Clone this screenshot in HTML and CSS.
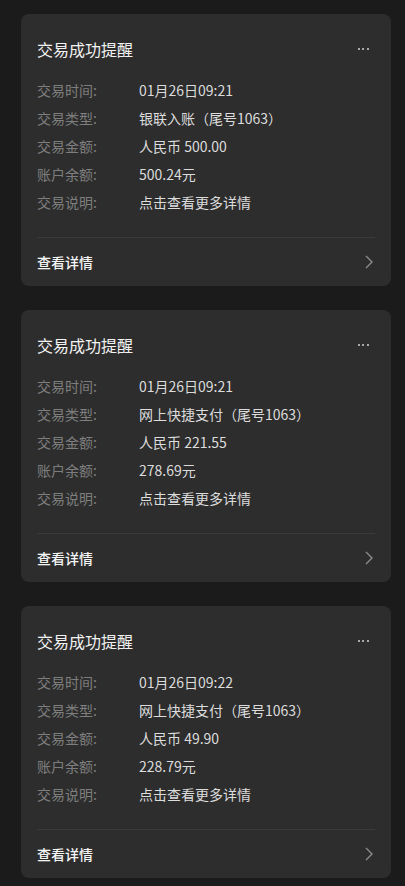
FILE: index.html
```html
<!DOCTYPE html>
<html lang="zh-CN">
  <head>
    <meta charset="UTF-8" />
    <meta name="viewport" content="width=device-width, initial-scale=1.0" />
    <title>交易提醒</title>
    <link rel="stylesheet" href="styles.css">
  </head>
  <body>
    <div class="list">
      <div class="card">
        <div class="card-head">
          <span class="title">交易成功提醒</span>
          <span class="more"><i></i><i></i><i></i></span>
        </div>
        <div class="rows">
          <div class="row"><span class="label">交易时间:</span><span class="value">01月26日09:21</span></div>
          <div class="row"><span class="label">交易类型:</span><span class="value">银联入账（尾号1063）</span></div>
          <div class="row"><span class="label">交易金额:</span><span class="value">人民币 500.00</span></div>
          <div class="row"><span class="label">账户余额:</span><span class="value">500.24元</span></div>
          <div class="row"><span class="label">交易说明:</span><span class="value">点击查看更多详情</span></div>
        </div>
        <div class="card-foot">
          <span>查看详情</span>
          <svg class="arrow" width="8" height="14" viewBox="0 0 8 14"><path d="M1 1l6 6-6 6" fill="none" stroke="#8c8c8c" stroke-width="1.4"/></svg>
        </div>
      </div>

      <div class="card">
        <div class="card-head">
          <span class="title">交易成功提醒</span>
          <span class="more"><i></i><i></i><i></i></span>
        </div>
        <div class="rows">
          <div class="row"><span class="label">交易时间:</span><span class="value">01月26日09:21</span></div>
          <div class="row"><span class="label">交易类型:</span><span class="value">网上快捷支付（尾号1063）</span></div>
          <div class="row"><span class="label">交易金额:</span><span class="value">人民币 221.55</span></div>
          <div class="row"><span class="label">账户余额:</span><span class="value">278.69元</span></div>
          <div class="row"><span class="label">交易说明:</span><span class="value">点击查看更多详情</span></div>
        </div>
        <div class="card-foot">
          <span>查看详情</span>
          <svg class="arrow" width="8" height="14" viewBox="0 0 8 14"><path d="M1 1l6 6-6 6" fill="none" stroke="#8c8c8c" stroke-width="1.4"/></svg>
        </div>
      </div>

      <div class="card">
        <div class="card-head">
          <span class="title">交易成功提醒</span>
          <span class="more"><i></i><i></i><i></i></span>
        </div>
        <div class="rows">
          <div class="row"><span class="label">交易时间:</span><span class="value">01月26日09:22</span></div>
          <div class="row"><span class="label">交易类型:</span><span class="value">网上快捷支付（尾号1063）</span></div>
          <div class="row"><span class="label">交易金额:</span><span class="value">人民币 49.90</span></div>
          <div class="row"><span class="label">账户余额:</span><span class="value">228.79元</span></div>
          <div class="row"><span class="label">交易说明:</span><span class="value">点击查看更多详情</span></div>
        </div>
        <div class="card-foot">
          <span>查看详情</span>
          <svg class="arrow" width="8" height="14" viewBox="0 0 8 14"><path d="M1 1l6 6-6 6" fill="none" stroke="#8c8c8c" stroke-width="1.4"/></svg>
        </div>
      </div>
    </div>
  </body>
</html>
```

FILE: styles.css
```css
body {
  margin: 0;
  background: #1b1b1b;
  font-family: "Noto Sans CJK SC", "Noto Sans", sans-serif;
}

.list {
  display: flex;
  flex-direction: column;
  gap: 24px;
  padding: 14px 14px 8px 21px;
}

.card {
  background: #2d2d2d;
  border-radius: 8px;
  padding: 0 16px;
}

.card-head {
  display: flex;
  align-items: center;
  justify-content: space-between;
  padding: 23px 0 15px;
  height: 24px;
}

.title {
  color: #f2f2f2;
  font-size: 16px;
  line-height: 24px;
}

.more {
  display: flex;
  gap: 2.7px;
  margin-right: 6px;
}

.more i {
  width: 2px;
  height: 2px;
  background: #a8a8a8;
}

.rows {
  display: flex;
  flex-direction: column;
  padding-bottom: 21px;
  border-bottom: 1px solid #3a3a3a;
}

.row {
  display: flex;
  height: 28px;
  align-items: center;
  font-size: 14px;
}

.label {
  width: 102px;
  color: #7e7e7e;
  word-spacing: 2px;
}

.value {
  color: #dcdcdc;
}

.card-foot {
  display: flex;
  align-items: center;
  justify-content: space-between;
  height: 48px;
  color: #f5f5f5;
  font-size: 14px;
  font-weight: 500;
}

.arrow {
  margin-right: 2px;
}
```
